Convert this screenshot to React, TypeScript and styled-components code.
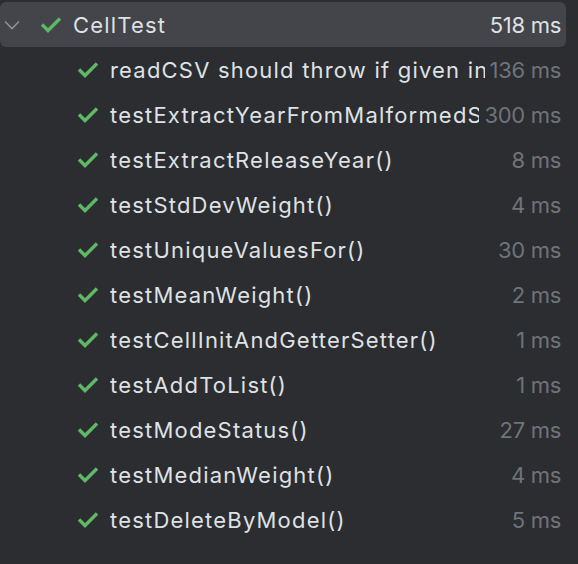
import React from "react";
import styled, {createGlobalStyle} from "styled-components";

const GlobalStyle = createGlobalStyle`
  html, body {
    margin: 0;
    padding: 0;
    background: #2b2d30;
  }
  body {
    font-family: Inter, "Noto Sans", "Liberation Sans", sans-serif;
  }
`

const Tree = styled.div`
  width: 578px;
  height: 564px;
  padding-top: 2px;
  box-sizing: border-box;
  background: #2b2d30;
  overflow: hidden;
`
const Row = styled.div<{ $selected?: boolean, $depth: number }>`
  display: flex;
  align-items: center;
  height: 45px;
  width: 566px;
  box-sizing: border-box;
  padding-left: ${({$depth}) => $depth === 0 ? 4 : 77}px;
  padding-right: 5px;
  border-radius: 6px;
  background: ${({$selected}) => $selected ? "#43454a" : "transparent"};
  font-size: 22px;
  color: #dfe1e5;
`
const Chevron = styled.svg`
  width: 16px;
  height: 10px;
  margin-right: 20px;
  flex-shrink: 0;
`
const Check = styled.svg`
  width: 22px;
  height: 17px;
  margin-right: 11px;
  flex-shrink: 0;
`
const Name = styled.span`
  flex: 1;
  min-width: 0;
  overflow: hidden;
  white-space: nowrap;
  letter-spacing: 1.2px;
`
const Time = styled.span<{ $bright?: boolean }>`
  margin-left: 5px;
  white-space: nowrap;
  flex-shrink: 0;
  letter-spacing: -0.3px;
  color: ${({$bright}) => $bright ? "#dfe1e5" : "#6f737a"};
`

const CheckIcon = () => (
    <Check viewBox="0 0 22 17">
        <path d="M2 8.5 L8 14.5 L20 2.5" fill="none" stroke="#5fb865" strokeWidth="3.4"/>
    </Check>
)

const tests = [
    {name: "readCSV should throw if given invalid path", ms: 136},
    {name: "testExtractYearFromMalformedString()", ms: 300},
    {name: "testExtractReleaseYear()", ms: 8},
    {name: "testStdDevWeight()", ms: 4},
    {name: "testUniqueValuesFor()", ms: 30},
    {name: "testMeanWeight()", ms: 2},
    {name: "testCellInitAndGetterSetter()", ms: 1},
    {name: "testAddToList()", ms: 1},
    {name: "testModeStatus()", ms: 27},
    {name: "testMedianWeight()", ms: 4},
    {name: "testDeleteByModel()", ms: 5},
]

export default function App() {
    return <>
        <GlobalStyle/>
        <Tree>
            <Row $selected $depth={0}>
                <Chevron viewBox="0 0 16 10">
                    <path d="M1 1.5 L8 8.5 L15 1.5" fill="none" stroke="#8c8f94" strokeWidth="1.6"/>
                </Chevron>
                <CheckIcon/>
                <Name>CellTest</Name>
                <Time $bright>518 ms</Time>
            </Row>
            {tests.map(({name, ms}, index) =>
                <Row key={index} $depth={1}>
                    <CheckIcon/>
                    <Name>{name}</Name>
                    <Time>{ms} ms</Time>
                </Row>
            )}
        </Tree>
    </>
}
